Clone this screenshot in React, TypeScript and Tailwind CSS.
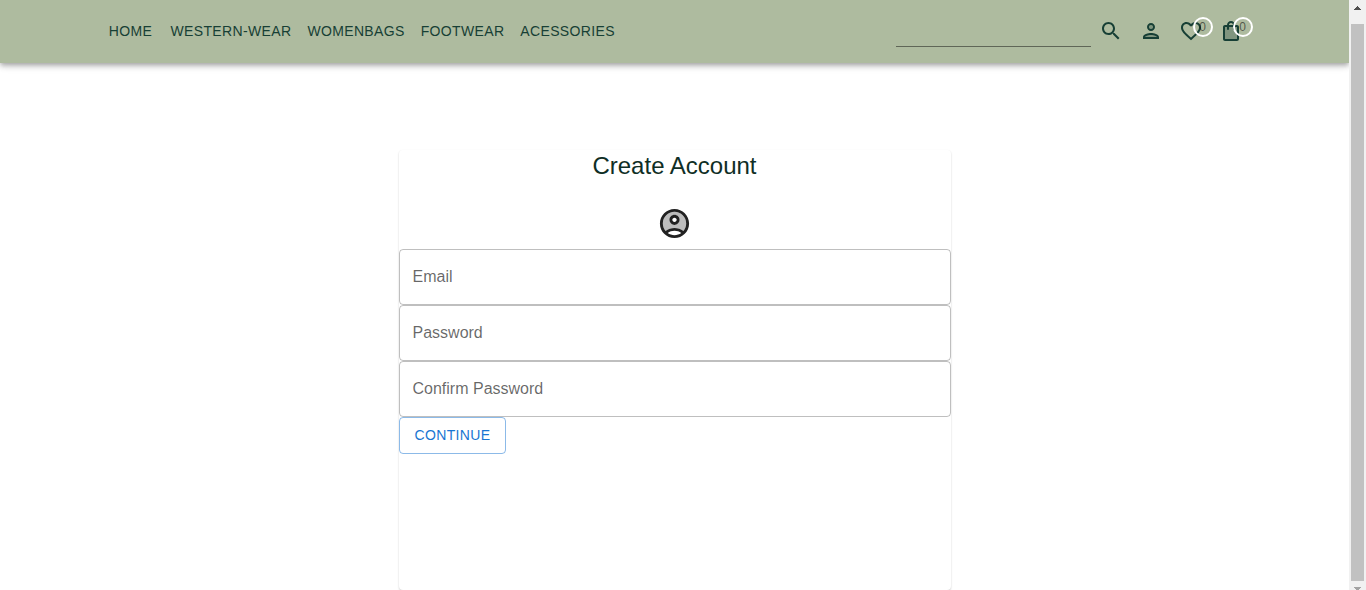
import type { ReactNode } from 'react';

const categories = ['Home', 'Western-wear', 'Womenbags', 'Footwear', 'Acessories'];

const fields = [
  { id: 'email', label: 'Email', type: 'email' },
  { id: 'password', label: 'Password', type: 'password' },
  { id: 'confirm-password', label: 'Confirm Password', type: 'password' },
];

function SearchIcon() {
  return (
    <svg viewBox="0 0 24 24" className="size-6 fill-current" aria-hidden="true">
      <path d="M15.5 14h-.79l-.28-.27C15.41 12.59 16 11.11 16 9.5 16 5.91 13.09 3 9.5 3S3 5.91 3 9.5 5.91 16 9.5 16c1.61 0 3.09-.59 4.23-1.57l.27.28v.79l5 4.99L20.49 19l-4.99-5zm-6 0C7.01 14 5 11.99 5 9.5S7.01 5 9.5 5 14 7.01 14 9.5 11.99 14 9.5 14z" />
    </svg>
  );
}

function PersonIcon() {
  return (
    <svg viewBox="0 0 24 24" className="size-6 fill-current" aria-hidden="true">
      <path d="M12 16c-2.69 0-5.77 1.28-6 2h12c-.2-.71-3.3-2-6-2z" opacity=".3" />
      <circle cx="12" cy="8" r="2" opacity=".3" />
      <path d="M12 14c-2.67 0-8 1.34-8 4v2h16v-2c0-2.66-5.33-4-8-4zm-6 4c.22-.72 3.31-2 6-2 2.7 0 5.8 1.29 6 2H6zm6-6c2.21 0 4-1.79 4-4s-1.79-4-4-4-4 1.79-4 4 1.79 4 4 4zm0-6c1.1 0 2 .9 2 2s-.9 2-2 2-2-.9-2-2 .9-2 2-2z" />
    </svg>
  );
}

function HeartIcon() {
  return (
    <svg viewBox="0 0 24 24" className="size-6 fill-current" aria-hidden="true">
      <path d="M16.5 3c-1.74 0-3.41.81-4.5 2.09C10.91 3.81 9.24 3 7.5 3 4.42 3 2 5.42 2 8.5c0 3.78 3.4 6.86 8.55 11.54L12 21.35l1.45-1.32C18.6 15.36 22 12.28 22 8.5 22 5.42 19.58 3 16.5 3zm-4.4 15.55l-.1.1-.1-.1C7.14 14.24 4 11.39 4 8.5 4 6.5 5.5 5 7.5 5c1.54 0 3.04.99 3.57 2.36h1.87C13.46 5.99 14.96 5 16.5 5c2 0 3.5 1.5 3.5 3.5 0 2.89-3.14 5.74-7.9 10.05z" />
    </svg>
  );
}

function BagIcon() {
  return (
    <svg viewBox="0 0 24 24" className="size-6 fill-current" aria-hidden="true">
      <path d="M16 10c0 .55-.45 1-1 1s-1-.45-1-1V8h-4v2c0 .55-.45 1-1 1s-1-.45-1-1V8H6v12h12V8h-2v2z" opacity=".3" />
      <path d="M18 6h-2c0-2.21-1.79-4-4-4S8 3.79 8 6H6c-1.1 0-2 .9-2 2v12c0 1.1.9 2 2 2h12c1.1 0 2-.9 2-2V8c0-1.1-.9-2-2-2zm-6-2c1.1 0 2 .9 2 2h-4c0-1.1.9-2 2-2zm6 16H6V8h2v2c0 .55.45 1 1 1s1-.45 1-1V8h4v2c0 .55.45 1 1 1s1-.45 1-1V8h2v12z" />
    </svg>
  );
}

function AccountIcon() {
  return (
    <svg viewBox="0 0 24 24" className="size-[35px] fill-[#212121]" aria-hidden="true">
      <path d="M12 4c-4.42 0-8 3.58-8 8 0 1.95.7 3.73 1.86 5.12C7.55 15.8 9.68 15 12 15s4.45.8 6.14 2.12C19.3 15.73 20 13.95 20 12c0-4.42-3.58-8-8-8zm0 9c-1.93 0-3.5-1.57-3.5-3.5S10.07 6 12 6s3.5 1.57 3.5 3.5S13.93 13 12 13z" opacity=".3" />
      <path d="M12 2C6.48 2 2 6.48 2 12s4.48 10 10 10 10-4.48 10-10S17.52 2 12 2zM7.35 18.5C8.66 17.56 10.26 17 12 17s3.34.56 4.65 1.5C15.34 19.44 13.74 20 12 20s-3.34-.56-4.65-1.5zm10.79-1.38C16.45 15.8 14.32 15 12 15s-4.45.8-6.14 2.12C4.7 15.73 4 13.95 4 12c0-4.42 3.58-8 8-8s8 3.58 8 8c0 1.95-.7 3.73-1.86 5.12z" />
      <path d="M12 6c-1.93 0-3.5 1.57-3.5 3.5S10.07 13 12 13s3.5-1.57 3.5-3.5S13.93 6 12 6zm0 5c-.83 0-1.5-.67-1.5-1.5S11.17 8 12 8s1.5.67 1.5 1.5S12.83 11 12 11z" />
    </svg>
  );
}

function IconButton({ name, count, children }: { name: string; count?: number; children: ReactNode }) {
  return (
    <button type="button" aria-label={name} className="relative rounded-full p-2">
      {children}
      {count !== undefined && (
        <span className="absolute top-1.5 -right-0.5 flex size-5 items-center justify-center rounded-full border-2 border-white text-xs text-black/55">
          {count}
        </span>
      )}
    </button>
  );
}

function Header() {
  return (
    <header className="relative bg-[#aebb9f] text-[#173f35] shadow-[0_2px_4px_-1px_rgba(0,0,0,0.2),0_4px_5px_0_rgba(0,0,0,0.14),0_1px_10px_0_rgba(0,0,0,0.12)]">
      <div className="mx-auto flex h-[63px] max-w-[1200px] items-center justify-between px-6 pb-px">
        <nav className="flex items-center">
          {categories.map((category) => (
            <a key={category} href="#" className="min-w-16 px-2 text-center text-sm tracking-wide uppercase">
              {category}
            </a>
          ))}
        </nav>
        <div className="flex items-center">
          <input
            type="search"
            aria-label="Search"
            className="h-8 w-[195px] border-b border-black/45 bg-transparent text-base outline-none"
          />
          <IconButton name="Search"><SearchIcon /></IconButton>
          <IconButton name="Account"><PersonIcon /></IconButton>
          <IconButton name="Wishlist" count={0}><HeartIcon /></IconButton>
          <IconButton name="Bag" count={0}><BagIcon /></IconButton>
        </div>
      </div>
    </header>
  );
}

function Field({ id, label, type }: { id: string; label: string; type: string }) {
  return (
    <div className="relative">
      <input
        id={id}
        type={type}
        placeholder=" "
        className="peer block h-14 w-full rounded border border-black/25 bg-transparent px-3.5 text-base outline-none focus:border-[#1976d2]"
      />
      <label
        htmlFor={id}
        className="absolute inset-y-0 left-3.5 flex items-center text-base text-black/60 peer-focus:hidden peer-[:not(:placeholder-shown)]:hidden"
      >
        {label}
      </label>
    </div>
  );
}

function SignUpCard() {
  return (
    <section className="min-h-[440px] rounded bg-white shadow-[0_1px_2px_rgba(0,0,0,0.2)]">
      <h1 className="text-center text-2xl leading-8 text-[#0f2e25]">Create Account</h1>
      <div className="mt-6 mb-2 flex justify-center">
        <AccountIcon />
      </div>
      <form>
        {fields.map((field) => (
          <Field key={field.id} {...field} />
        ))}
        <button
          type="button"
          className="flex h-[37px] items-center rounded border border-[#1976d2]/50 px-[15px] pb-px text-sm tracking-wide text-[#1976d2] uppercase"
        >
          Continue
        </button>
      </form>
    </section>
  );
}

function ScrollRail() {
  return (
    <div aria-hidden="true" className="flex w-[17px] shrink-0 flex-col items-center bg-[#f1f1f1]">
      <div className="flex h-6 w-full justify-center pt-1.5">
        <svg viewBox="0 0 7 4" className="h-1 w-[7px] fill-[#505050]"><path d="M3 0h1v1h1v1h1v1h1v1H0V3h1V2h1V1h1z" /></svg>
      </div>
      <div className="w-[13px] flex-1 bg-[#c1c1c1]" />
      <div className="flex h-[9px] w-full items-end justify-center">
        <svg viewBox="0 0 7 3" className="h-[3px] w-[7px] fill-[#a3a3a3]"><path d="M0 0h7v1H6v1H5v1H2V2H1V1H0z" /></svg>
      </div>
    </div>
  );
}

export default function App() {
  return (
    <div className="flex h-screen bg-white font-['Liberation_Sans',Arial,sans-serif]">
      <div className="min-w-0 flex-1 overflow-hidden">
        <Header />
        <main className="mx-auto mt-[87px] max-w-[600px] px-6">
          <SignUpCard />
        </main>
      </div>
      <ScrollRail />
    </div>
  );
}
